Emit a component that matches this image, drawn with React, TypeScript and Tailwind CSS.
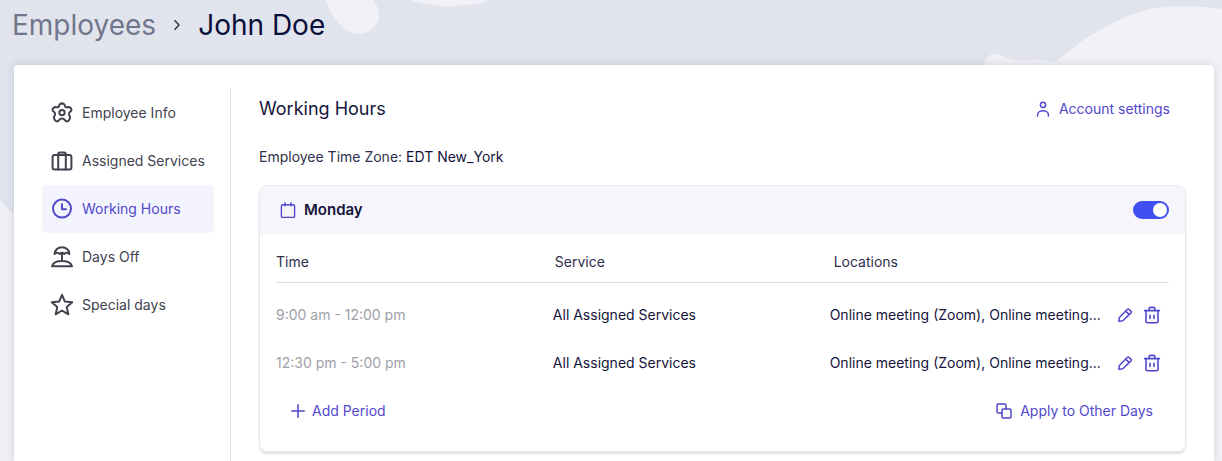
import { useState, type ReactNode } from "react";

type IconProps = { className?: string; children: ReactNode; box?: number };

// Shared outline icon frame
function Icon({ className = "size-6", children, box = 24 }: IconProps) {
    return (
        <svg
            className={`shrink-0 ${className}`}
            viewBox={`0 0 ${box} ${box}`}
            fill="none"
            stroke="currentColor"
            strokeWidth="2"
            strokeLinecap="round"
            strokeLinejoin="round"
            aria-hidden="true"
        >
            {children}
        </svg>
    );
}

const navItems = [
    {
        label: "Employee Info",
        icon: (
            <>
                <path d="M9.6 3.4Q12 1.4 14.4 3.4L15.4 5.8Q16 6.6 17.2 6.2L18.6 5.9Q20.8 6 21.5 8.6Q21.6 10.2 19.8 11Q18.5 12 19 13.6L20.1 16.2Q20.2 18.6 17.9 20.2Q16.2 20.9 15 19.2Q13.6 17.4 12 17.4Q10.4 17.4 9 19.2Q7.8 20.9 6.1 20.2Q3.8 18.6 3.9 16.2L5 13.6Q5.5 12 4.2 11Q2.4 10.2 2.5 8.6Q3.2 6 5.4 5.9L6.8 6.2Q8 6.6 8.6 5.8Z" />
                <circle cx="12" cy="11.6" r="2.7" />
            </>
        ),
    },
    {
        label: "Assigned Services",
        icon: (
            <>
                <rect x="2.6" y="6" width="18.8" height="14.4" rx="2" />
                <path d="M8.2 20.4V5.2Q8.2 3.4 10 3.4H14Q15.8 3.4 15.8 5.2V20.4" />
            </>
        ),
    },
    {
        label: "Working Hours",
        icon: (
            <>
                <circle cx="12" cy="11.6" r="9" />
                <path d="M12 7.2V12.2H16" />
            </>
        ),
    },
    {
        label: "Days Off",
        icon: (
            <>
                <path d="M4.6 9C4.8 5 8 2.2 12 2.2S19.2 5 19.4 9C17.6 7.4 15.6 7.4 14.4 9Q12 6.8 9.6 9C8.4 7.4 6.4 7.4 4.6 9Z" />
                <path d="M12 8.4V16M2 21.2H22C21 18 17 16 12 16S3 18 2 21.2Z" />
            </>
        ),
    },
    {
        label: "Special days",
        icon: (
            <path d="M12 1.9L14.9 8.6L22.2 9.3L16.7 14.1L18.3 21.3L12 17.5L5.7 21.3L7.3 14.1L1.8 9.3L9.1 8.6Z" />
        ),
    },
];

const periods = [
    {
        time: "9:00 am - 12:00 pm",
        service: "All Assigned Services",
        locations: "Online meeting (Zoom), Online meeting...",
    },
    {
        time: "12:30 pm - 5:00 pm",
        service: "All Assigned Services",
        locations: "Online meeting (Zoom), Online meeting...",
    },
];

function Backdrop() {
    return (
        <svg
            className="absolute inset-0 -z-10 h-full w-full"
            viewBox="0 0 1222 461"
            preserveAspectRatio="xMidYMin slice"
            aria-hidden="true"
        >
            <path fill="#f1f1f7" d="M326 0C330 14 339 27 350 32C361 37 374 32 379 19C380 12 377 5 373 0Z" />
            <path fill="#f1f1f7" d="M411 0C432 8 465 8 492 0Z" />
            <path fill="#f1f1f7" d="M984 65C986 56 992 52 999 54C1009 59 1017 61 1030 60C1041 59 1048 62 1056 62C1078 41 1117 17 1149 9C1177 5 1200 6 1222 9V461H1180Z" />
            <path fill="#efeff6" d="M0 200C8 208 14 216 22 220V461H0Z" />
        </svg>
    );
}

export default function App() {
    const [active, setActive] = useState("Working Hours");
    const [enabled, setEnabled] = useState(true);

    return (
        <div className="relative isolate flex min-h-screen flex-col overflow-hidden bg-[#e1e4ec] font-['Inter',sans-serif] text-sm text-[#14143a]">
            <Backdrop />

            {/* BREADCRUMB */}
            <nav aria-label="Breadcrumb" className="flex h-[65px] items-center gap-4 px-3 pb-4 text-[28px] leading-8">
                <a href="#employees" className="text-[#70778c]">Employees</a>
                <Icon box={10} className="size-2.5 text-[#33334d]">
                    <path d="M3 0.8L7 5L3 9.2" strokeWidth="1.5" />
                </Icon>
                <h1 className="text-[#0b0f3b]">John Doe</h1>
            </nav>

            <main className="mr-2 ml-3.5 flex flex-1 rounded-t bg-white pt-6 pr-7 pl-7 shadow-[0_0_8px_rgba(60,50,90,0.16)]">
                {/* SIDE MENU */}
                <nav aria-label="Employee" className="w-[189px] shrink-0 border-r border-[#dddde3] pr-4">
                    {navItems.map((item) => (
                        <button
                            key={item.label}
                            type="button"
                            onClick={() => setActive(item.label)}
                            className={`flex h-12 w-full items-center gap-2 rounded pl-2 text-left whitespace-nowrap ${
                                active === item.label ? "bg-[#f3f4fe] text-[#5148cc]" : "text-[#42424f]"
                            }`}
                        >
                            <Icon>{item.icon}</Icon>
                            {item.label}
                        </button>
                    ))}
                </nav>

                {/* CONTENT */}
                <div className="min-w-0 flex-1 pb-2 pl-7">
                    <div className="flex h-10 items-center justify-between pr-4">
                        <h2 className="text-lg">Working Hours</h2>
                        <a href="#account" className="flex items-center gap-2 text-[#5148cc]">
                            <Icon box={16} className="size-4">
                                <circle cx="8" cy="3.8" r="2.6" strokeWidth="1.5" />
                                <path d="M2.6 15V13.8C2.6 8.4 13.4 8.4 13.4 13.8V15" strokeWidth="1.5" />
                            </Icon>
                            Account settings
                        </a>
                    </div>

                    <p className="flex h-14 items-center gap-1 text-[#2f2f4c]">
                        Employee Time Zone:
                        <span className="text-[#14143a]">EDT New_York</span>
                    </p>

                    <section className="overflow-hidden rounded-lg border border-[#e8e8ee] shadow-[0_2px_2px_rgba(40,40,60,0.14)]">
                        <header className="flex h-12 items-center gap-2 bg-[#f5f5fb] pr-4 pl-5">
                            <Icon box={16} className="size-4 text-[#5148cc]">
                                <path d="M2.6 2.8H13.4Q14.6 2.8 14.6 4V14.2Q14.6 15.4 13.4 15.4H2.6Q1.4 15.4 1.4 14.2V4Q1.4 2.8 2.6 2.8ZM5 0.8V4M11 0.8V4" strokeWidth="1.4" />
                            </Icon>
                            <h3 className="flex-1 text-[15px] font-semibold">Monday</h3>
                            <input
                                type="checkbox"
                                aria-label="Monday"
                                checked={enabled}
                                onChange={(e) => setEnabled(e.target.checked)}
                                className="flex h-[18px] w-9 appearance-none items-center rounded-full bg-gray-300 px-0.5 before:size-3.5 before:rounded-full before:bg-white checked:justify-end checked:bg-[#4050f0]"
                            />
                        </header>

                        <div className="px-4 pb-4">
                            <table className="w-full table-fixed text-left">
                                <colgroup>
                                    <col className="w-[31%]" />
                                    <col className="w-[31%]" />
                                    <col />
                                    <col className="w-[52px]" />
                                </colgroup>
                                <thead>
                                    <tr className="h-12 border-b border-[#dcdce2] text-[#2f2f4c]">
                                        <th className="pt-2 font-normal">Time</th>
                                        <th className="pt-2 pl-0.5 font-normal">Service</th>
                                        <th className="pt-2 pl-1 font-normal" colSpan={2}>Locations</th>
                                    </tr>
                                </thead>
                                <tbody className="before:block before:h-2">
                                    {periods.map((period) => (
                                        <tr key={period.time} className="h-12">
                                            <td className="text-[#a09fa9]">{period.time}</td>
                                            <td>{period.service}</td>
                                            <td className="truncate">{period.locations}</td>
                                            <td>
                                                <div className="flex items-center gap-2.5 text-[#5148cc]">
                                                    <button type="button" aria-label="Edit period">
                                                        <Icon box={16} className="size-4">
                                                            <path d="M1.8 14.3L2.4 10.6L10.2 2.5Q11.2 1.5 12.2 2.5L13.8 4.1Q14.8 5.1 13.8 6.1L5.8 13.8ZM8.7 4.1L12.2 7.6" strokeWidth="1.5" />
                                                        </Icon>
                                                    </button>
                                                    <button type="button" aria-label="Delete period">
                                                        <Icon box={18} className="size-[18px]">
                                                            <path d="M1.5 4.6H16.5M3 4.6V15.2Q3 16.8 4.6 16.8H13.4Q15 16.8 15 15.2V4.6M6.2 4.4V2.6Q6.2 1.4 7.4 1.4H10.6Q11.8 1.4 11.8 2.6V4.4M7 9.4V12.4M11 9.4V12.4" strokeWidth="1.6" />
                                                        </Icon>
                                                    </button>
                                                </div>
                                            </td>
                                        </tr>
                                    ))}
                                </tbody>
                            </table>

                            <div className="flex h-12 items-center justify-between pr-4 pl-3.5 text-[#5148cc]">
                                <button type="button" className="flex items-center gap-1.5">
                                    <Icon box={16} className="size-4">
                                        <path d="M8 1.8V14.2M1.8 8H14.2" strokeWidth="1.6" />
                                    </Icon>
                                    Add Period
                                </button>
                                <button type="button" className="flex items-center gap-2">
                                    <Icon box={16} className="size-4">
                                        <rect x="6" y="6" width="9" height="9" rx="1.2" strokeWidth="1.5" />
                                        <path d="M6 10H2.2Q1 10 1 8.8V2.2Q1 1 2.2 1H8.8Q10 1 10 2.2V6" strokeWidth="1.5" />
                                    </Icon>
                                    Apply to Other Days
                                </button>
                            </div>
                        </div>
                    </section>
                </div>
            </main>
        </div>
    );
}
